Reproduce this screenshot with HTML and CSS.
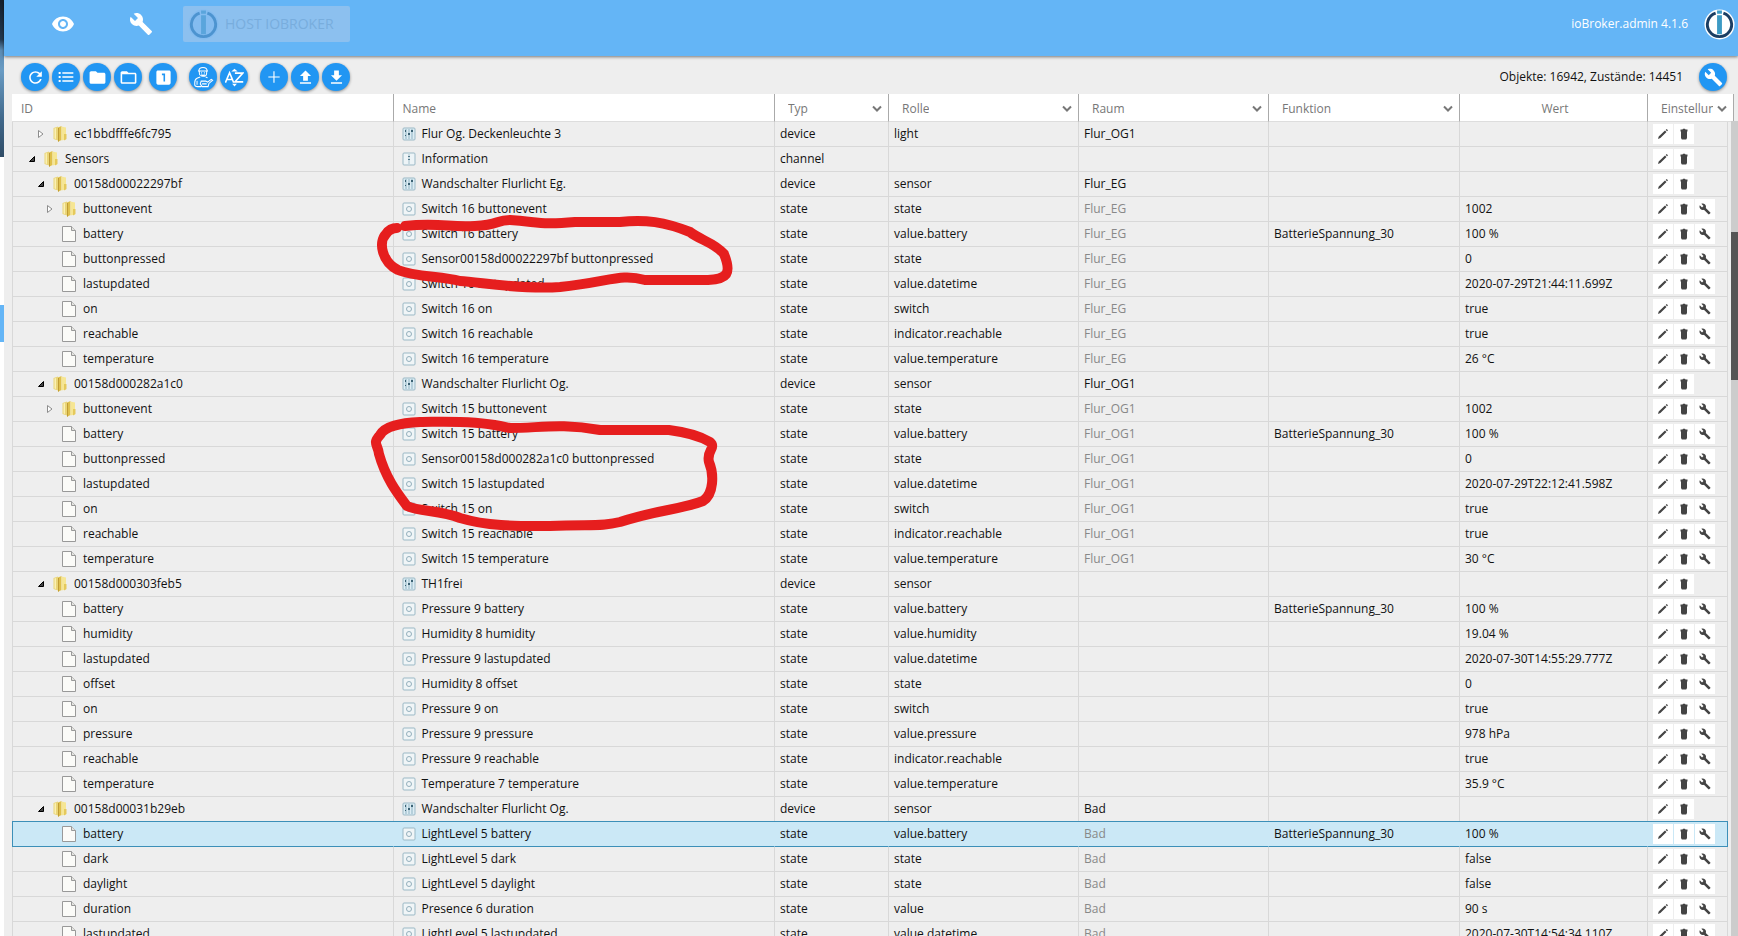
FILE: index.html
```html
<!DOCTYPE html>
<html lang="de">
<head>
<meta charset="utf-8">
<title>ioBroker.admin</title>
<link rel="stylesheet" href="styles.css">
</head>
<body>
<svg class="sprite" aria-hidden="true">
  <symbol id="eye" viewBox="0 0 24 24"><path d="M12 4.500C7 4.500 2.730 7.610 1 12c1.730 4.390 6 7.500 11 7.500s9.270-3.110 11-7.500c-1.730-4.390-6-7.500-11-7.500zM12 17c-2.760 0-5-2.240-5-5s2.240-5 5-5 5 2.240 5 5-2.240 5-5 5zm0-8c-1.660 0-3 1.340-3 3s1.340 3 3 3 3-1.340 3-3-1.340-3-3-3z"/></symbol>
  <symbol id="wrench" viewBox="0 0 24 24"><path d="M22.700 19l-9.100-9.100c.9-2.300.4-5-1.500-6.900-2-2-5-2.400-7.400-1.300L9 6 6 9 1.600 4.700C.4 7.100.9 10.100 2.900 12.100c1.900 1.900 4.600 2.400 6.900 1.500l9.100 9.100c.4.4 1 .4 1.400 0l2.300-2.300c.5-.4.5-1.100.1-1.400z"/></symbol>
  <symbol id="refresh" viewBox="0 0 24 24"><path d="M17.650 6.350C16.200 4.900 14.210 4 12 4c-4.420 0-7.990 3.580-7.990 8s3.570 8 7.990 8c3.730 0 6.840-2.550 7.730-6h-2.080c-.82 2.330-3.040 4-5.650 4-3.310 0-6-2.690-6-6s2.690-6 6-6c1.660 0 3.140.69 4.220 1.780L13 11h7V4l-2.350 2.350z"/></symbol>
  <symbol id="list" viewBox="0 0 24 24"><path d="M1 4.500h3v3H1zM1 10.500h3v3H1zM1 16.500h3v3H1zM6.500 5H23v2H6.500zM6.500 11H23v2H6.500zM6.500 17H23v2H6.500z"/></symbol>
  <symbol id="folder" viewBox="0 0 24 24"><path d="M10 4H4c-1.100 0-1.990.9-1.990 2L2 18c0 1.100.9 2 2 2h16c1.100 0 2-.9 2-2V8c0-1.100-.9-2-2-2h-8l-2-2z"/></symbol>
  <symbol id="folder-open" viewBox="0 0 24 24"><path d="M20 6h-8l-2-2H4c-1.100 0-1.990.9-1.990 2L2 18c0 1.100.9 2 2 2h16c1.100 0 2-.9 2-2V8c0-1.100-.9-2-2-2zm0 12H4V8h16v10z"/></symbol>
  <symbol id="one" viewBox="0 0 24 24"><path fill-rule="evenodd" d="M19 3H5c-1.100 0-2 .9-2 2v14c0 1.100.9 2 2 2h14c1.100 0 2-.9 2-2V5c0-1.100-.9-2-2-2zm-5 14h-2V9h-2V7h4v10z"/></symbol>
  <symbol id="expert" viewBox="0 0 24 24"><g fill="none" stroke="currentColor" stroke-width="1.100"><path d="M6.500 5.500h11M7.500 5.500C7.500.2 16.500.2 16.500 5.500M8 5.500v2c0 5 8 5 8 0v-2M10 7.500h1M13 7.500h1M10 9.500q2 1 4 0M9 12l-3 1q-3 1-3 5v2.500q0 2 3 2h4M5.500 16v4.500M15 12l2 1M10 16.500h5l2 1 4-3 1.500 1-4 3.500-1 3.500H11l-2-3zM11 19.500h5"/></g></symbol>
  <symbol id="sort" viewBox="0 0 24 24"><path fill="none" stroke="currentColor" stroke-width="2" d="M.5 18.500L5.800 6l5.200 12.500M2.500 14.500h7M12.500 6.500h10L12.500 17.500h10.500"/><path d="M8 4.500l4-3.500 4 3.500zM9 20h6l-3 3.500z"/></symbol>
  <symbol id="plus" viewBox="0 0 24 24"><path d="M20.500 12.800h-7.700v7.700h-1.700v-7.700H3.500v-1.700h7.600V3.500h1.700v7.600h7.700z"/></symbol>
  <symbol id="upload" viewBox="0 0 24 24"><path d="M9 16h6v-6h4l-7-7-7 7h4zM5 18h14v2H5z"/></symbol>
  <symbol id="download" viewBox="0 0 24 24"><path d="M19 9h-4V3H9v6H5l7 7 7-7zM5 18v2h14v-2H5z"/></symbol>
  <symbol id="logo" viewBox="0 0 32 32"><circle class="logo-disc" cx="16" cy="16" r="15.500"/><path class="logo-ring" d="M12 4.200A12.500 12.500 0 1 0 20 4.200"/><path class="logo-bar" d="M13.500 6.500h5V26h-5zM13.500 1.500h5v3.500h-5z"/></symbol>
  <symbol id="chevron" viewBox="0 0 10 8"><path fill="none" stroke="currentColor" stroke-width="2" d="M1 1.500l4 4 4-4"/></symbol>
  <symbol id="closed" viewBox="0 0 10 10"><path fill="#fff" stroke="#8c8c8c" d="M2.500 1.500L7 5 2.500 8.500z"/></symbol>
  <symbol id="opened" viewBox="0 0 10 10"><path fill="#444" stroke="#000" d="M7.500 2.500v5h-5z"/></symbol>
  <symbol id="dir" viewBox="0 0 16 18"><path fill="#ead578" d="M1.500 3L6 1.500v14L1.500 14z"/><path fill="#faf0b4" d="M2.500 3.500L4 3v11l-1.500-.5z"/><path fill="#dfc04c" d="M6 2.500l3.500-1.500v14L6 16.800z"/><path fill="#f6e694" d="M9.500 1.500L14 2.500v12l-4.500 1z"/><path fill="#e5c95c" d="M12 9h2.500v5L12 15.500z"/><path fill="#c09c34" d="M6 3h1v13.500H6z"/></symbol>
  <symbol id="file" viewBox="0 0 16 18"><path fill="#fbfbf8" stroke="#999" d="M1.500 1.500h9l4 4v11h-13z"/><path fill="#e4e4e0" stroke="#999" d="M10.500 1.500v4h4"/></symbol>
  <symbol id="device" viewBox="0 0 14 14"><rect x="1" y="1" width="12" height="12" rx="1" fill="#dcecf3" stroke="#9bb9c6"/><path stroke="#8fb3c3" d="M4 2v10M7 2v10M10 2v10"/><path fill="#3b6274" d="M3 3h1v2H3zM6 6h2v2H6zM9 3h2v2H9zM3 8h1v1H3z"/></symbol>
  <symbol id="channel" viewBox="0 0 14 14"><rect x="1" y="1" width="12" height="12" rx="1" fill="#edf4f7" stroke="#9bb9c6"/><path stroke="#a5c0cc" d="M7 2v10"/><path fill="#4f7789" d="M6 4h2v1H6zM6 7h2v1H6z"/></symbol>
  <symbol id="state" viewBox="0 0 14 14"><rect x="1" y="1" width="12" height="12" rx="1" fill="#f0f5f7" stroke="#9bb9c6"/><circle cx="7" cy="7" r="2.500" fill="none" stroke="#93afbc"/></symbol>
  <symbol id="pencil" viewBox="0 0 12 12"><path d="M1 11l.7-2.500L8 2.500 9.500 4 3.400 10zM8.700 1.900l1-.9L11 2.300l-.9 1z"/></symbol>
  <symbol id="trash" viewBox="0 0 12 12"><path d="M2.500 1.500h2l.5-.8h2l.5.800h2V3.500H9V10l-.8 1.500H3.800L3 10V3.500h-.5z"/></symbol>
</svg>

<div class="app">
  <div class="rail"><span class="rail-photo"></span><span class="rail-active"></span></div>
  <div class="main">
    <header class="topbar">
      <button class="nav-btn" aria-label="Sichtbarkeit"><svg><use href="#eye"/></svg></button>
      <button class="nav-btn" aria-label="Einstellungen"><svg><use href="#wrench"/></svg></button>
      <button class="host" disabled><svg class="logo"><use href="#logo"/></svg>HOST IOBROKER</button>
      <span class="version">ioBroker.admin 4.1.6</span>
      <svg class="logo"><use href="#logo"/></svg>
    </header>

    <div class="toolbar">
      <div class="group">
        <button class="round" aria-label="Aktualisieren"><svg class="big"><use href="#refresh"/></svg></button>
        <button class="round" aria-label="Liste"><svg><use href="#list"/></svg></button>
        <button class="round" aria-label="Alle schließen"><svg class="big"><use href="#folder"/></svg></button>
        <button class="round" aria-label="Alle öffnen"><svg class="big"><use href="#folder-open"/></svg></button>
      </div>
      <div class="group group-near">
        <button class="round" aria-label="Ebene 1"><svg class="big"><use href="#one"/></svg></button>
      </div>
      <div class="group">
        <button class="round" aria-label="Expertenmodus"><svg class="huge"><use href="#expert"/></svg></button>
        <button class="round" aria-label="Sortieren"><svg class="big"><use href="#sort"/></svg></button>
      </div>
      <div class="group">
        <button class="round" aria-label="Hinzufügen"><svg><use href="#plus"/></svg></button>
        <button class="round" aria-label="Hochladen"><svg class="big"><use href="#upload"/></svg></button>
        <button class="round" aria-label="Herunterladen"><svg class="big"><use href="#download"/></svg></button>
      </div>
      <span class="counts">Objekte: 16942, Zustände: 14451</span>
      <button class="round" aria-label="Spalten"><svg class="big"><use href="#wrench"/></svg></button>
    </div>

    <div class="grid">
      <table>
        <colgroup>
          <col><col><col class="c-type"><col class="c-mid"><col class="c-mid"><col class="c-func"><col class="c-value"><col class="c-act"><col class="c-gutter">
        </colgroup>
        <thead>
          <tr>
            <th>ID</th>
            <th>Name</th>
            <th><button class="filter"><span>Typ</span><svg><use href="#chevron"/></svg></button></th>
            <th><button class="filter"><span>Rolle</span><svg><use href="#chevron"/></svg></button></th>
            <th><button class="filter"><span>Raum</span><svg><use href="#chevron"/></svg></button></th>
            <th><button class="filter"><span>Funktion</span><svg><use href="#chevron"/></svg></button></th>
            <th class="center">Wert</th>
            <th colspan="2"><button class="filter"><span>Einstellungen</span><svg><use href="#chevron"/></svg></button></th>
          </tr>
        </thead>
        <tbody id="rows"></tbody>
      </table>
      <div class="scrollbar"><span class="thumb"></span></div>
      <svg class="marks" aria-hidden="true">
        <path d="M45 132C80 128 90 134 115 132C140 131 135 126 150 126C180 128 180 131 215 128H260C285 125 305 128 330 138C340 146 355 149 364 160C372 180 367 185 348 186H285C260 179 250 188 200 193C160 196 120 188 100 187C80 182 55 183 38 176C22 168 18 148 26 140Q30 134 37 134"/>
        <path d="M140 332C110 326 80 328 60 328C40 329 25 332 20 341C12 350 18 350 19 360C26 385 38 400 47 412C60 418 80 416 100 424C130 433 160 432 190 432C230 430 240 433 260 428C300 415 320 416 343 407C354 400 354 380 349 368C346 356 357 354 350 348C340 342 325 338 309 336H240C200 329 180 334 150 334Z"/>
      </svg>
    </div>
  </div>
</div>
<script src="rows.js"></script>
</body>
</html>
```
FILE: styles.css
```css
* { box-sizing: border-box; }
body {
  margin: 0;
  height: 100vh;
  overflow: hidden;
  background: #eee;
  color: #111;
  font: 12px/24px "Open Sans", "Noto Sans", sans-serif;
}
button { border: 0; padding: 0; margin: 0; background: none; font: inherit; color: inherit; }
svg { fill: currentColor; flex: none; display: block; }
.sprite { position: absolute; width: 0; height: 0; }

.app { display: flex; height: 100%; }
.rail { flex: none; width: 4px; background: #fff; display: flex; flex-direction: column; }
.rail-photo { height: 157px; background: linear-gradient(#16202e, #22384f 25%, #5c8cb4 32%, #6a9cc4 45%, #41698c 75%, #2f4c66); }
.rail-active { margin-top: 148px; height: 37px; background: #64b5f6; }
.main { flex: 1; min-width: 0; display: flex; flex-direction: column; }

.topbar {
  --disc: #fff;
  --ring: #1b3e63;
  --bar: #3c9ac4;
  flex: none;
  display: flex;
  align-items: center;
  height: 56px;
  padding: 0 3px 8px 20px;
  background: #64b5f6;
  color: #fff;
  box-shadow: 0 1px 3px rgba(0, 0, 0, .5);
}
.nav-btn { width: 78px; display: flex; justify-content: center; }
.nav-btn svg { width: 24px; height: 24px; }
.host {
  --disc: #84bcf0;
  --ring: #4d94d0;
  --bar: #5aa5dc;
  display: flex;
  align-items: center;
  gap: 6px;
  height: 36px;
  margin-left: 3px;
  padding: 0 16px 0 5px;
  border-radius: 2px;
  background: #8cc0ef;
  color: #78addd;
  font-size: 14px;
}
.logo { width: 31px; height: 31px; }
.logo-disc { fill: var(--disc); }
.logo-ring { fill: none; stroke: var(--ring); stroke-width: 3px; }
.logo-bar { fill: var(--bar); }
.version { margin-left: auto; padding-right: 16px; }

.toolbar {
  flex: none;
  display: flex;
  align-items: center;
  gap: 12px;
  height: 38px;
  padding: 4px 11px 0 17px;
}
.group { display: flex; gap: 3px; }
.group-near { margin-left: -5px; }
.round {
  flex: none;
  display: grid;
  place-items: center;
  width: 28px;
  height: 28px;
  border-radius: 50%;
  background: #2196f3;
  color: #fff;
  box-shadow: 0 1px 3px rgba(0, 0, 0, .4);
}
.round svg { width: 16px; height: 16px; }
.round .big { width: 19px; height: 19px; }
.round .huge { width: 22px; height: 22px; }
.counts { margin-left: auto; padding-right: 4px; }

.grid { flex: 1; position: relative; overflow: hidden; padding: 0 4px 0 8px; }
table { width: 100%; table-layout: fixed; border-collapse: separate; border-spacing: 0; }
.c-type { width: 114px; }
.c-mid { width: 190px; }
.c-func { width: 191px; }
.c-value { width: 188px; }
.c-act { width: 80px; }
.c-gutter { width: 6px; }
th {
  height: 28px;
  padding: 3px 6px 0 9px;
  text-align: left;
  font-weight: 400;
  line-height: 22px;
  color: #777;
  background: #fff;
  border-right: 1px solid #aaa;
  border-bottom: 1px solid #ddd;
}
th.center { text-align: center; }
.filter { display: flex; justify-content: space-between; align-items: center; gap: 4px; width: 100%; padding-left: 4px; }
.filter span { overflow: hidden; }
.filter svg { width: 10px; height: 8px; }
td {
  height: 25px;
  padding: 0 5px;
  white-space: nowrap;
  overflow: hidden;
  border-right: 1px solid #d8d8d8;
  border-bottom: 1px solid #d8d8d8;
}
td:first-child { border-left: 1px solid #d8d8d8; }
td:nth-child(2) { padding-left: 8px; }
.cell { display: flex; align-items: center; height: 24px; }
.twist { width: 10px; height: 10px; margin-right: 6px; }
.icon { width: 16px; height: 18px; margin-right: 6px; }
.kind { width: 14px; height: 14px; margin-right: 6px; }
.level-1 { padding-left: 9px; }
.level-2 { padding-left: 18px; }
.level-3 { padding-left: 27px; }
.inherited { color: #888; }
.actions { display: flex; gap: 1px; }
.actions button { width: 20px; height: 20px; display: grid; place-items: center; background: #fff; color: #444; }
.actions svg { width: 12px; height: 12px; }
.selected td { background: #cbe8f6; border-color: #cbe8f6; border-bottom-color: #3c8fb8; box-shadow: 0 -1px #3c8fb8; overflow: visible; }
.selected td:first-child { border-left-color: #3c8fb8; }
.selected td:last-child { border-right-color: #3c8fb8; }

.scrollbar { position: absolute; top: 27px; right: 0; bottom: 0; width: 7px; background: #ccc; }
.thumb { display: block; height: 148px; margin-top: 111px; background: #555; }
.marks { position: absolute; top: 0; left: 356px; width: 380px; height: 450px; overflow: visible; fill: none; stroke: #e61e1e; stroke-width: 10px; stroke-linecap: round; stroke-linejoin: round; pointer-events: none; }
```
FILE: rows.js
```js
// id, level, kind, name, role, room, function, value, folder state
const rows = [
  ["ec1bbdfffe6fc795", 2, "device", "Flur Og. Deckenleuchte 3", "light", "Flur_OG1", "", "", "closed"],
  ["Sensors", 1, "channel", "Information", "", "", "", "", "opened"],
  ["00158d00022297bf", 2, "device", "Wandschalter Flurlicht Eg.", "sensor", "Flur_EG", "", "", "opened"],
  ["buttonevent", 3, "state", "Switch 16 buttonevent", "state", "Flur_EG", "", "1002", "closed"],
  ["battery", 3, "state", "Switch 16 battery", "value.battery", "Flur_EG", "BatterieSpannung_30", "100 %"],
  ["buttonpressed", 3, "state", "Sensor00158d00022297bf buttonpressed", "state", "Flur_EG", "", "0"],
  ["lastupdated", 3, "state", "Switch 16 lastupdated", "value.datetime", "Flur_EG", "", "2020-07-29T21:44:11.699Z"],
  ["on", 3, "state", "Switch 16 on", "switch", "Flur_EG", "", "true"],
  ["reachable", 3, "state", "Switch 16 reachable", "indicator.reachable", "Flur_EG", "", "true"],
  ["temperature", 3, "state", "Switch 16 temperature", "value.temperature", "Flur_EG", "", "26 °C"],
  ["00158d000282a1c0", 2, "device", "Wandschalter Flurlicht Og.", "sensor", "Flur_OG1", "", "", "opened"],
  ["buttonevent", 3, "state", "Switch 15 buttonevent", "state", "Flur_OG1", "", "1002", "closed"],
  ["battery", 3, "state", "Switch 15 battery", "value.battery", "Flur_OG1", "BatterieSpannung_30", "100 %"],
  ["buttonpressed", 3, "state", "Sensor00158d000282a1c0 buttonpressed", "state", "Flur_OG1", "", "0"],
  ["lastupdated", 3, "state", "Switch 15 lastupdated", "value.datetime", "Flur_OG1", "", "2020-07-29T22:12:41.598Z"],
  ["on", 3, "state", "Switch 15 on", "switch", "Flur_OG1", "", "true"],
  ["reachable", 3, "state", "Switch 15 reachable", "indicator.reachable", "Flur_OG1", "", "true"],
  ["temperature", 3, "state", "Switch 15 temperature", "value.temperature", "Flur_OG1", "", "30 °C"],
  ["00158d000303feb5", 2, "device", "TH1frei", "sensor", "", "", "", "opened"],
  ["battery", 3, "state", "Pressure 9 battery", "value.battery", "", "BatterieSpannung_30", "100 %"],
  ["humidity", 3, "state", "Humidity 8 humidity", "value.humidity", "", "", "19.04 %"],
  ["lastupdated", 3, "state", "Pressure 9 lastupdated", "value.datetime", "", "", "2020-07-30T14:55:29.777Z"],
  ["offset", 3, "state", "Humidity 8 offset", "state", "", "", "0"],
  ["on", 3, "state", "Pressure 9 on", "switch", "", "", "true"],
  ["pressure", 3, "state", "Pressure 9 pressure", "value.pressure", "", "", "978 hPa"],
  ["reachable", 3, "state", "Pressure 9 reachable", "indicator.reachable", "", "", "true"],
  ["temperature", 3, "state", "Temperature 7 temperature", "value.temperature", "", "", "35.9 °C"],
  ["00158d00031b29eb", 2, "device", "Wandschalter Flurlicht Og.", "sensor", "Bad", "", "", "opened"],
  ["battery", 3, "state", "LightLevel 5 battery", "value.battery", "Bad", "BatterieSpannung_30", "100 %"],
  ["dark", 3, "state", "LightLevel 5 dark", "state", "Bad", "", "false"],
  ["daylight", 3, "state", "LightLevel 5 daylight", "state", "Bad", "", "false"],
  ["duration", 3, "state", "Presence 6 duration", "value", "Bad", "", "90 s"],
  ["lastupdated", 3, "state", "LightLevel 5 lastupdated", "value.datetime", "Bad", "", "2020-07-30T14:54:34.110Z"]
];
const selectedIndex = 28;

const icon = (name, cls = "") => `<svg class="${cls}"><use href="#${name}"/></svg>`;
const action = (name, label) => `<button aria-label="${label}">${icon(name)}</button>`;

document.getElementById("rows").innerHTML = rows.map(([id, level, kind, name, role, room, func, value, folder], i) => {
  const isState = kind === "state";
  const twist = folder ? icon(folder, "twist") : '<span class="twist"></span>';
  return `<tr class="${i === selectedIndex ? "selected" : ""}">
    <td><div class="cell level-${level}">${twist}${icon(folder ? "dir" : "file", "icon")}${id}</div></td>
    <td><div class="cell">${icon(kind, "kind")}${name}</div></td>
    <td>${kind}</td>
    <td>${role}</td>
    <td class="${isState ? "inherited" : ""}">${room}</td>
    <td>${func}</td>
    <td>${value}</td>
    <td><div class="actions">${action("pencil", "Bearbeiten")}${action("trash", "Löschen")}${isState ? action("wrench", "Einstellungen") : ""}</div></td>
  </tr>`;
}).join("");
```
